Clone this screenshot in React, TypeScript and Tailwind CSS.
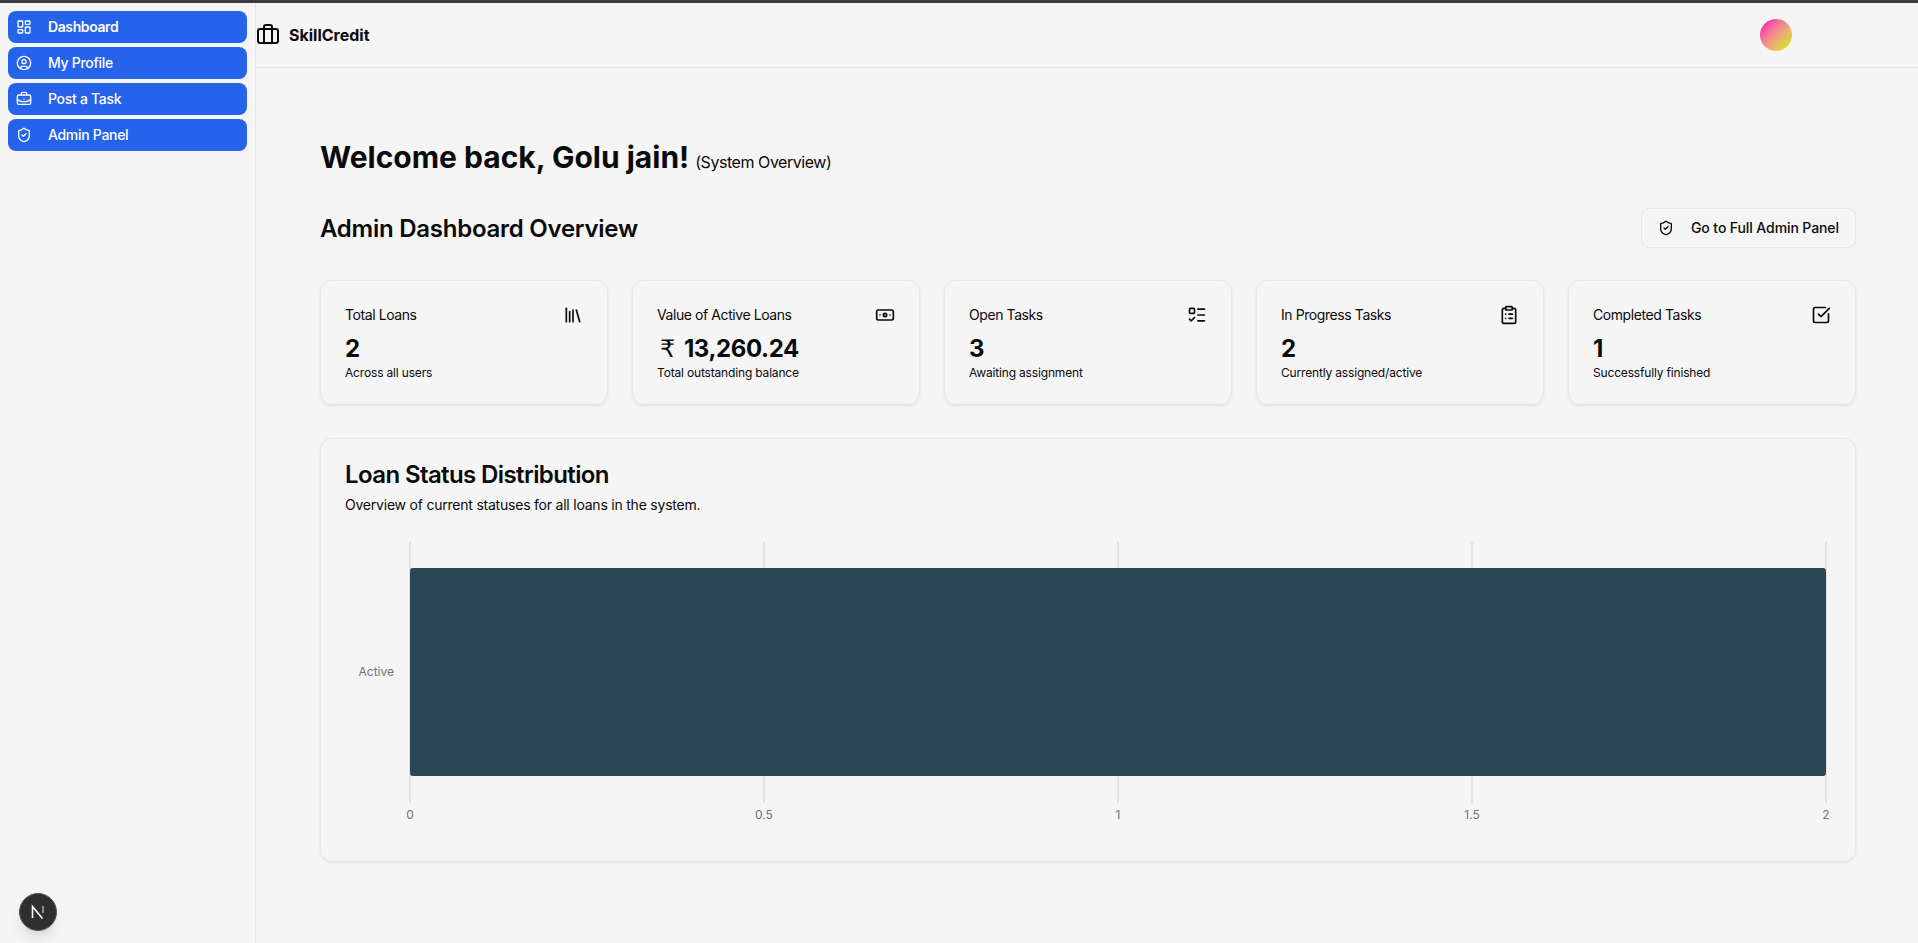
import {
  LayoutDashboard,
  CircleUser,
  BriefcaseBusiness,
  Briefcase,
  ShieldCheck,
  Library,
  Banknote,
  ListTodo,
  ClipboardList,
  SquareCheckBig,
} from 'lucide-react';

const navItems = [
  { label: 'Dashboard', icon: <LayoutDashboard size={16} />, active: true },
  { label: 'My Profile', icon: <CircleUser size={16} /> },
  { label: 'Post a Task', icon: <BriefcaseBusiness size={16} /> },
  { label: 'Admin Panel', icon: <ShieldCheck size={16} /> },
];

const stats = [
  { title: 'Total Loans', value: '2', note: 'Across all users', icon: <Library size={20} /> },
  { title: 'Value of Active Loans', value: '13,260.24', rupee: true, note: 'Total outstanding balance', icon: <Banknote size={20} /> },
  { title: 'Open Tasks', value: '3', note: 'Awaiting assignment', icon: <ListTodo size={20} /> },
  { title: 'In Progress Tasks', value: '2', note: 'Currently assigned/active', icon: <ClipboardList size={20} /> },
  { title: 'Completed Tasks', value: '1', note: 'Successfully finished', icon: <SquareCheckBig size={20} /> },
];

const ticks = [
  { x: 65, label: '0' },
  { x: 419, label: '0.5' },
  { x: 773, label: '1' },
  { x: 1127, label: '1.5' },
  { x: 1481, label: '2' },
];

const LoanChart = () => (
  <svg width="1486" height="292" viewBox="0 0 1486 292" className="block">
    {ticks.map((t) => (
      <line key={t.x} x1={t.x} x2={t.x} y1="0" y2="261" stroke="#dcdcdc" strokeWidth="1.5" />
    ))}
    <path d="M65 29a3 3 0 0 1 3-3h1410a3 3 0 0 1 3 3v202a3 3 0 0 1-3 3H68a3 3 0 0 1-3-3z" fill="#294754" />
    <text x="49" y="134" textAnchor="end" fontSize="12" fill="#737373">Active</text>
    {ticks.map((t) => (
      <text key={t.label} x={t.x} y="277" textAnchor="middle" fontSize="12" fill="#737373">{t.label}</text>
    ))}
  </svg>
);

const App = () => {
  return (
    <div className="relative flex flex-col h-[943px] overflow-hidden bg-[#f5f5f5] text-[#0a0a0a] font-['Inter',sans-serif]">
      <div className="h-[3px] bg-[#3b3b3b]" />
      <div className="flex flex-1 min-h-0">
        <aside className="w-[256px] shrink-0 border-r border-[#e5e5e5] p-2 flex flex-col gap-1">
          {navItems.map((item) => (
            <a
              key={item.label}
              className={`flex items-center h-8 rounded-lg bg-[#2563eb] pl-2 text-white text-sm ${
                item.active ? 'font-semibold tracking-[-0.4px]' : 'font-medium tracking-[-0.3px]'
              }`}
            >
              <span className="w-[32px] flex">{item.icon}</span>
              {item.label}
            </a>
          ))}
        </aside>

        <div className="flex-1 min-w-0 flex flex-col">
          <header className="h-[65px] shrink-0 border-b border-[#e5e5e5] flex items-center pr-[126px]">
            <Briefcase size={24} />
            <span className="ml-[9px] font-bold text-base">SkillCredit</span>
            <div className="ml-auto w-8 h-8 rounded-full bg-gradient-to-br from-[#f72cb0] from-15% to-[#d8dc10] to-85%" />
          </header>

          <main className="pl-[64px] pr-[62px] pt-[71px]">
            <div className="flex items-baseline gap-[6px]">
              <h1 className="text-3xl font-bold">Welcome back, Golu jain!</h1>
              <span className="text-base tracking-[-0.45px]">(System Overview)</span>
            </div>

            <div className="flex items-start justify-between mt-[33px]">
              <h2 className="text-2xl font-semibold tracking-[-0.25px] mt-[5px]">Admin Dashboard Overview</h2>
              <button className="flex items-center h-10 w-[215px] pl-4 rounded-lg border border-[#e5e5e5] text-sm font-medium tracking-[-0.1px]">
                <ShieldCheck size={16} />
                <span className="ml-[17px]">Go to Full Admin Panel</span>
              </button>
            </div>

            <div className="grid grid-cols-5 gap-6 mt-[32px]">
              {stats.map((s) => (
                <div key={s.title} className="h-[125px] rounded-xl border border-[#e5e5e5] shadow-[0_1px_3px_rgba(0,0,0,0.07)] px-6 pt-6">
                  <div className="flex items-center justify-between h-5">
                    <span className="text-sm tracking-[-0.42px]">{s.title}</span>
                    {s.icon}
                  </div>
                  <div className="text-2xl font-bold mt-[8px] tracking-[-0.4px] flex items-baseline">
                    {s.rupee && <span className="font-['DejaVu_Sans',sans-serif] font-normal ml-[3px] mr-[9px]">₹</span>}
                    {s.value}
                  </div>
                  <div className="text-xs tracking-[-0.17px]">{s.note}</div>
                </div>
              ))}
            </div>

            <section className="mt-[33px] h-[424px] rounded-xl border border-[#e5e5e5] shadow-[0_1px_3px_rgba(0,0,0,0.07)] px-6 pt-6">
              <h3 className="text-2xl font-semibold leading-none tracking-[-0.6px]">Loan Status Distribution</h3>
              <p className="text-sm mt-2 mb-[27px] tracking-[-0.22px]">Overview of current statuses for all loans in the system.</p>
              <LoanChart />
            </section>
          </main>
        </div>
      </div>

      {/* dev indicator */}
      <div className="absolute left-[19px] bottom-[12px] w-[38px] h-[38px] rounded-full bg-[#2f2f2f] border border-[#555] shadow-lg flex items-center justify-center">
        <svg width="16" height="16" viewBox="0 0 16 16" fill="none" stroke="#fff" strokeWidth="1.6">
          <path d="M2.5 14V2.5l10 12" />
          <path d="M13 2v7" stroke="#aaa" />
        </svg>
      </div>
    </div>
  );
};

export default App;
